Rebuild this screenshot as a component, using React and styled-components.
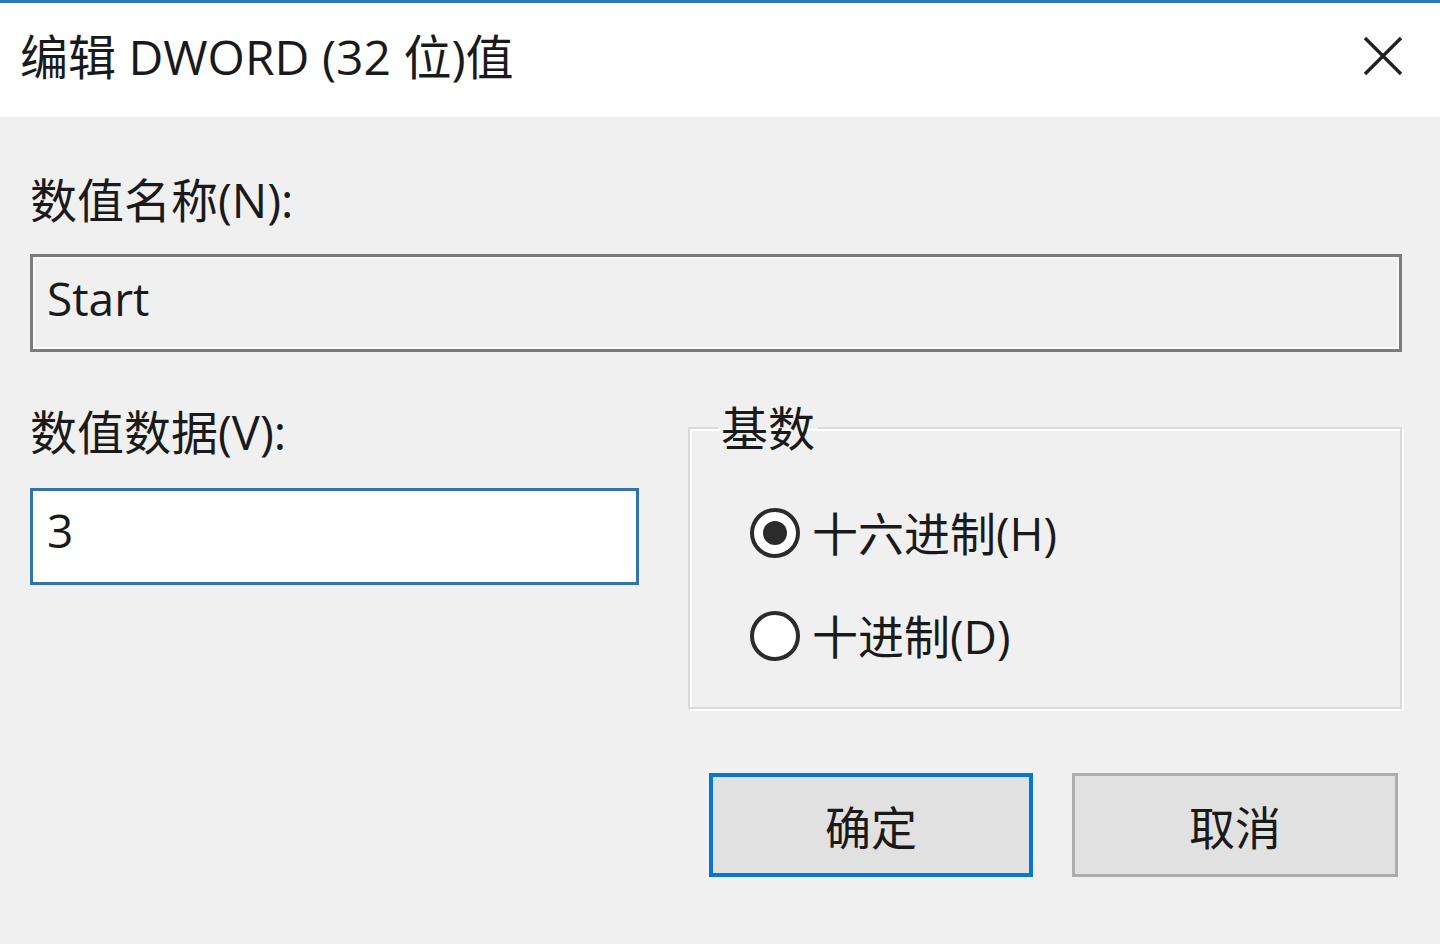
import React from "react";
import styled, { createGlobalStyle } from "styled-components";

const Global = createGlobalStyle`
  html, body { margin: 0; padding: 0; background: #f0f0f0; }
  body {
    font-family: "Open Sans", "Noto Sans CJK SC", sans-serif;
    color: #1a1a1a;
  }
  * { box-sizing: border-box; }
`;

const Dialog = styled.div`
  width: 1440px;
  height: 944px;
  display: flex;
  flex-direction: column;
  background: #f0f0f0;
  border-top: 3px solid #2f78c0;
  overflow: hidden;
`;

const TitleBar = styled.div`
  height: 114px;
  background: #ffffff;
  display: flex;
  align-items: center;
  justify-content: space-between;
  padding: 0 37px 0 20px;
`;

const Title = styled.div`
  font-size: 48px;
  line-height: 1;
  color: #1a1a1a;
  margin-top: -6px;
`;

const CloseButton = styled.button`
  border: none;
  background: transparent;
  padding: 0;
  width: 40px;
  height: 40px;
  display: flex;
  margin-top: -8px;
`;

const Body = styled.div`
  padding: 54px 38px 0 30px;
  display: flex;
  flex-direction: column;
`;

const Label = styled.div`
  font-size: 47px;
  line-height: 58px;
  height: 58px;
  white-space: nowrap;
`;

const TextBox = styled.div`
  height: ${(p) => p.$h}px;
  border: 3px solid ${(p) => (p.$focused ? "#3272ad" : "#7a7a7a")};
  background: ${(p) => (p.$focused ? "#ffffff" : "#f0f0f0")};
  box-shadow: inset 0 0 0 2px ${(p) => (p.$focused ? "#ffffff" : "#fafafa")};
  font-size: 46px;
  display: flex;
  align-items: flex-start;
  padding: ${(p) => p.$pt}px 0 0 14px;
  line-height: 1.1;
`;

const Row = styled.div`
  display: grid;
  grid-template-columns: 609px 714px;
  column-gap: 49px;
  margin-top: 47px;
`;

const Column = styled.div`
  display: flex;
  flex-direction: column;
  padding-top: 4px;
`;

const InputGap = styled.div`
  height: 27px;
`;

const Group = styled.fieldset`
  margin: 0;
  padding: 0 0 0 28px;
  border: 2px solid #dadada;
  box-shadow: 2px 2px 0 #ffffff, inset 2px 2px 0 #ffffff;
  height: 310px;
  min-width: 0;
`;

const Legend = styled.legend`
  font-size: 47px;
  line-height: 58px;
  padding: 0 3px;
`;

const RadioList = styled.div`
  display: flex;
  flex-direction: column;
  gap: 53px;
  padding: 51px 0 0 32px;
`;

const RadioRow = styled.label`
  display: flex;
  align-items: center;
  gap: 12px;
  font-size: 46px;
  line-height: 50px;
  height: 50px;
  white-space: nowrap;
`;

const RadioCircle = styled.span`
  width: 50px;
  height: 50px;
  border-radius: 50%;
  border: 4px solid #2b2b2b;
  background: #ffffff;
  display: flex;
  align-items: center;
  justify-content: center;
  flex: none;
  &::after {
    content: "";
    width: 24px;
    height: 24px;
    border-radius: 50%;
    background: #2b2b2b;
    display: ${(p) => (p.$checked ? "block" : "none")};
  }
`;

const ButtonRow = styled.div`
  display: flex;
  justify-content: flex-end;
  gap: 39px;
  margin-top: 64px;
  padding-right: 4px;
`;

const Button = styled.button`
  width: ${(p) => p.$w}px;
  height: 104px;
  background: #e1e1e1;
  border: ${(p) => (p.$primary ? "4px solid #0a74d4" : "3px solid #adadad")};
  font-family: "Open Sans", "Noto Sans CJK SC", sans-serif;
  font-size: 46px;
  color: #1a1a1a;
  padding: 0;
  display: flex;
  align-items: center;
  justify-content: center;
`;

export default function App() {
  return (
    <>
      <Global />
      <Dialog>
        <TitleBar>
          <Title>编辑 DWORD (32 位)值</Title>
          <CloseButton aria-label="关闭">
            <svg width="40" height="40" viewBox="0 0 40 40">
              <path d="M2 2 L38 38 M38 2 L2 38" stroke="#222" strokeWidth="3.4" fill="none" />
            </svg>
          </CloseButton>
        </TitleBar>
        <Body>
          <Label>数值名称(N):</Label>
          <TextBox $h={98} $pt={16} style={{ marginTop: 25 }}>Start</TextBox>
          <Row>
            <Column>
              <Label>数值数据(V):</Label>
              <InputGap />
              <TextBox $h={97} $pt={14} $focused>3</TextBox>
            </Column>
            <Group>
              <Legend>基数</Legend>
              <RadioList>
                <RadioRow>
                  <RadioCircle $checked />
                  十六进制(H)
                </RadioRow>
                <RadioRow>
                  <RadioCircle />
                  十进制(D)
                </RadioRow>
              </RadioList>
            </Group>
          </Row>
          <ButtonRow>
            <Button $primary $w={324}>确定</Button>
            <Button $w={326}>取消</Button>
          </ButtonRow>
        </Body>
      </Dialog>
    </>
  );
}
